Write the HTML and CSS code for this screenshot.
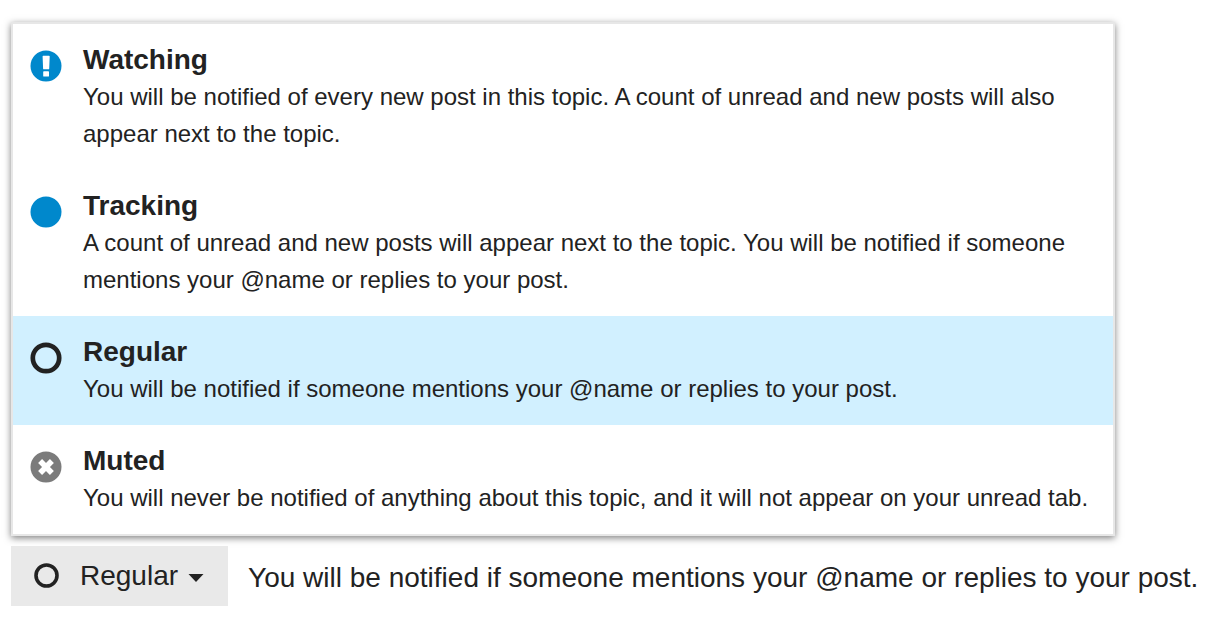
FILE: index.html
```
<!DOCTYPE html>
<html lang="en">
<head>
<meta charset="utf-8">
<title>Topic notifications</title>
<link rel="stylesheet" href="styles.css">
</head>
<body>
<main class="notifications">
  <ul class="menu">
    <li>
      <button class="option" type="button">
        <svg class="icon" viewBox="0 0 32 32" aria-hidden="true"><circle cx="16" cy="16" r="15.5" fill="#0088cc"/><path d="M13.2 5.7h5.8q.7 0 .7.7l-.5 12.3q0 .6-.7.6h-4.7q-.7 0-.7-.6l-.5-12.3q0-.7.6-.7z" fill="#fff"/><rect x="13.2" y="21.2" width="5.8" height="5.4" rx=".7" fill="#fff"/></svg>
        <span class="text"><span class="title">Watching</span><span class="description">You will be notified of every new post in this topic. A count of unread and new posts will also appear next to the topic.</span></span>
      </button>
    </li>
    <li>
      <button class="option" type="button">
        <svg class="icon" viewBox="0 0 32 32" aria-hidden="true"><circle cx="16" cy="16" r="15.5" fill="#0088cc"/></svg>
        <span class="text"><span class="title">Tracking</span><span class="description">A count of unread and new posts will appear next to the topic. You will be notified if someone mentions your @name or replies to your post.</span></span>
      </button>
    </li>
    <li>
      <button class="option selected" type="button">
        <svg class="icon" viewBox="0 0 32 32" aria-hidden="true"><circle cx="16" cy="16" r="13.2" fill="none" stroke="#222" stroke-width="4.7"/></svg>
        <span class="text"><span class="title">Regular</span><span class="description">You will be notified if someone mentions your @name or replies to your post.</span></span>
      </button>
    </li>
    <li>
      <button class="option" type="button">
        <svg class="icon" viewBox="0 0 32 32" aria-hidden="true"><circle cx="16" cy="16" r="15.5" fill="#7b7b7b"/><path d="M10.1 10.1l11.8 11.8M21.9 10.1L10.1 21.9" stroke="#fff" stroke-width="5.6"/></svg>
        <span class="text"><span class="title">Muted</span><span class="description">You will never be notified of anything about this topic, and it will not appear on your unread tab.</span></span>
      </button>
    </li>
  </ul>
  <div class="footer">
    <button class="toggle" type="button">
      <svg class="ring" viewBox="0 0 26 26" aria-hidden="true"><circle cx="13.5" cy="12.5" r="10.5" fill="none" stroke="#222" stroke-width="3.6"/></svg>
      <span>Regular</span>
      <svg class="caret" viewBox="0 0 16 8" aria-hidden="true"><path d="M.5 0h15L8 8z" fill="#222"/></svg>
    </button>
    <p class="summary">You will be notified if someone mentions your @name or replies to your post.</p>
  </div>
</main>
</body>
</html>
```
FILE: styles.css
```
* { box-sizing: border-box; }
body {
  margin: 0;
  background: #fff;
  color: #222;
  font-family: "Liberation Sans", Arial, sans-serif;
}
button {
  border: 0;
  color: inherit;
  font: inherit;
  text-align: left;
  cursor: pointer;
}
.notifications { padding: 22px 11px 0; }
.menu {
  max-width: 1104px;
  margin: 0;
  padding: 0;
  list-style: none;
  background: #fff;
  border: 2px solid #e7e7e7;
  box-shadow: 0 2px 7px rgba(0, 0, 0, 0.5);
}
.option {
  display: flex;
  gap: 21px;
  width: 100%;
  padding: 17px 17px 18px;
  background: transparent;
}
.option.selected { background: #d1f0ff; }
.icon {
  flex: none;
  width: 32px;
  height: 32px;
  margin-top: 9px;
}
.title {
  display: block;
  font-size: 28px;
  line-height: 37px;
  font-weight: bold;
}
.description {
  display: block;
  font-size: 24px;
  line-height: 37px;
}
.footer {
  display: flex;
  align-items: center;
  gap: 20px;
  margin-top: 10px;
}
.toggle {
  display: flex;
  align-items: center;
  flex: none;
  height: 60px;
  padding: 0 24px 0 22px;
  background: #e9e9e9;
  font-size: 28px;
}
.ring { width: 26px; height: 26px; margin-right: 21px; }
.caret { width: 16px; height: 8px; margin: 4px 0 0 10px; }
.summary { margin: 0; padding-top: 2px; font-size: 28px; line-height: 37px; white-space: nowrap; }
```
